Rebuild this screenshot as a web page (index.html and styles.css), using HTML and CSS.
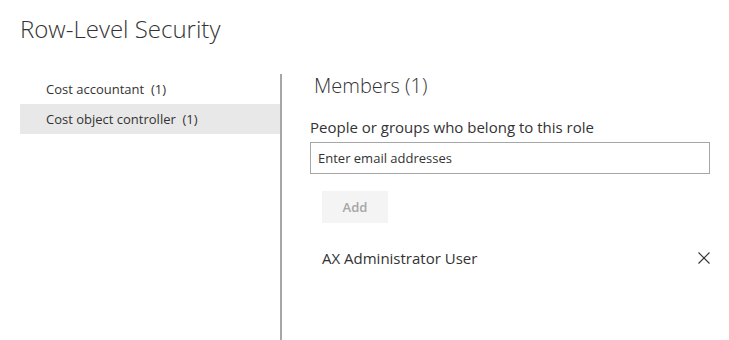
FILE: index.html
```html
<!DOCTYPE html>
<html lang="en">
<head>
    <meta charset="UTF-8">
    <meta name="viewport" content="width=device-width, initial-scale=1.0">
    <title>Row-Level Security</title>
    <link rel="stylesheet" href="styles.css">
</head>
<body>
    <div class="page">
        <h1>Row-Level Security</h1>
        <div class="layout">
            <ul class="roles">
                <li class="role">Cost accountant&nbsp; (1)</li>
                <li class="role selected">Cost object controller&nbsp; (1)</li>
            </ul>
            <div class="members">
                <h2>Members (1)</h2>
                <label class="field-label" for="email">People or groups who belong to this role</label>
                <input class="email" id="email" type="text" placeholder="Enter email addresses">
                <button class="add" disabled>Add</button>
                <div class="member">
                    <span>AX Administrator User</span>
                    <button class="remove" aria-label="Remove">
                        <svg width="12" height="12" viewBox="0 0 12 12">
                            <path d="M0.5 0.5 L11.5 11.5 M11.5 0.5 L0.5 11.5" stroke="#333" stroke-width="1.1" fill="none"/>
                        </svg>
                    </button>
                </div>
            </div>
        </div>
    </div>
</body>
</html>
```

FILE: styles.css
```css
body {
    margin: 0;
    font-family: "Open Sans", "Noto Sans", sans-serif;
    color: #333;
    background: #fff;
    overflow: hidden;
}

.page {
    padding: 0 19px 0 20px;
}

h1 {
    margin: 0;
    padding-top: 12px;
    height: 74px;
    box-sizing: border-box;
    font-size: 24px;
    font-weight: 300;
    line-height: 34px;
    color: #333;
}

.layout {
    display: flex;
    height: 270px;
}

.roles {
    list-style: none;
    margin: 0;
    padding: 0;
    width: 260px;
    border-right: 2px solid #a6a6a6;
}

.role {
    height: 30px;
    line-height: 30px;
    padding-left: 26px;
    font-size: 13px;
    color: #333;
}

.role.selected {
    background: #e8e8e8;
}

.members {
    flex: 1;
    padding-left: 28px;
    display: flex;
    flex-direction: column;
    align-items: flex-start;
}

h2 {
    margin: 0 0 0 4px;
    font-size: 20px;
    font-weight: 300;
    line-height: 24px;
    height: 38px;
    color: #333;
}

.field-label {
    font-size: 15px;
    line-height: 30px;
    color: #333;
}

.email {
    width: 100%;
    height: 32px;
    box-sizing: border-box;
    border: 1px solid #a6a6a6;
    padding: 0 7px;
    font-family: inherit;
    font-size: 13px;
    color: #333;
}

.email::placeholder {
    color: #333;
}

.add {
    margin: 17px 0 0 12px;
    width: 66px;
    height: 32px;
    border: none;
    background: #f4f4f4;
    color: #a6a6a6;
    font-family: inherit;
    font-size: 13px;
    font-weight: 600;
}

.member {
    align-self: stretch;
    display: flex;
    align-items: center;
    justify-content: space-between;
    margin-top: 19px;
    padding-left: 12px;
    height: 32px;
    font-size: 15px;
}

.remove {
    border: none;
    background: none;
    padding: 0;
    width: 12px;
    height: 12px;
    display: flex;
}
```
